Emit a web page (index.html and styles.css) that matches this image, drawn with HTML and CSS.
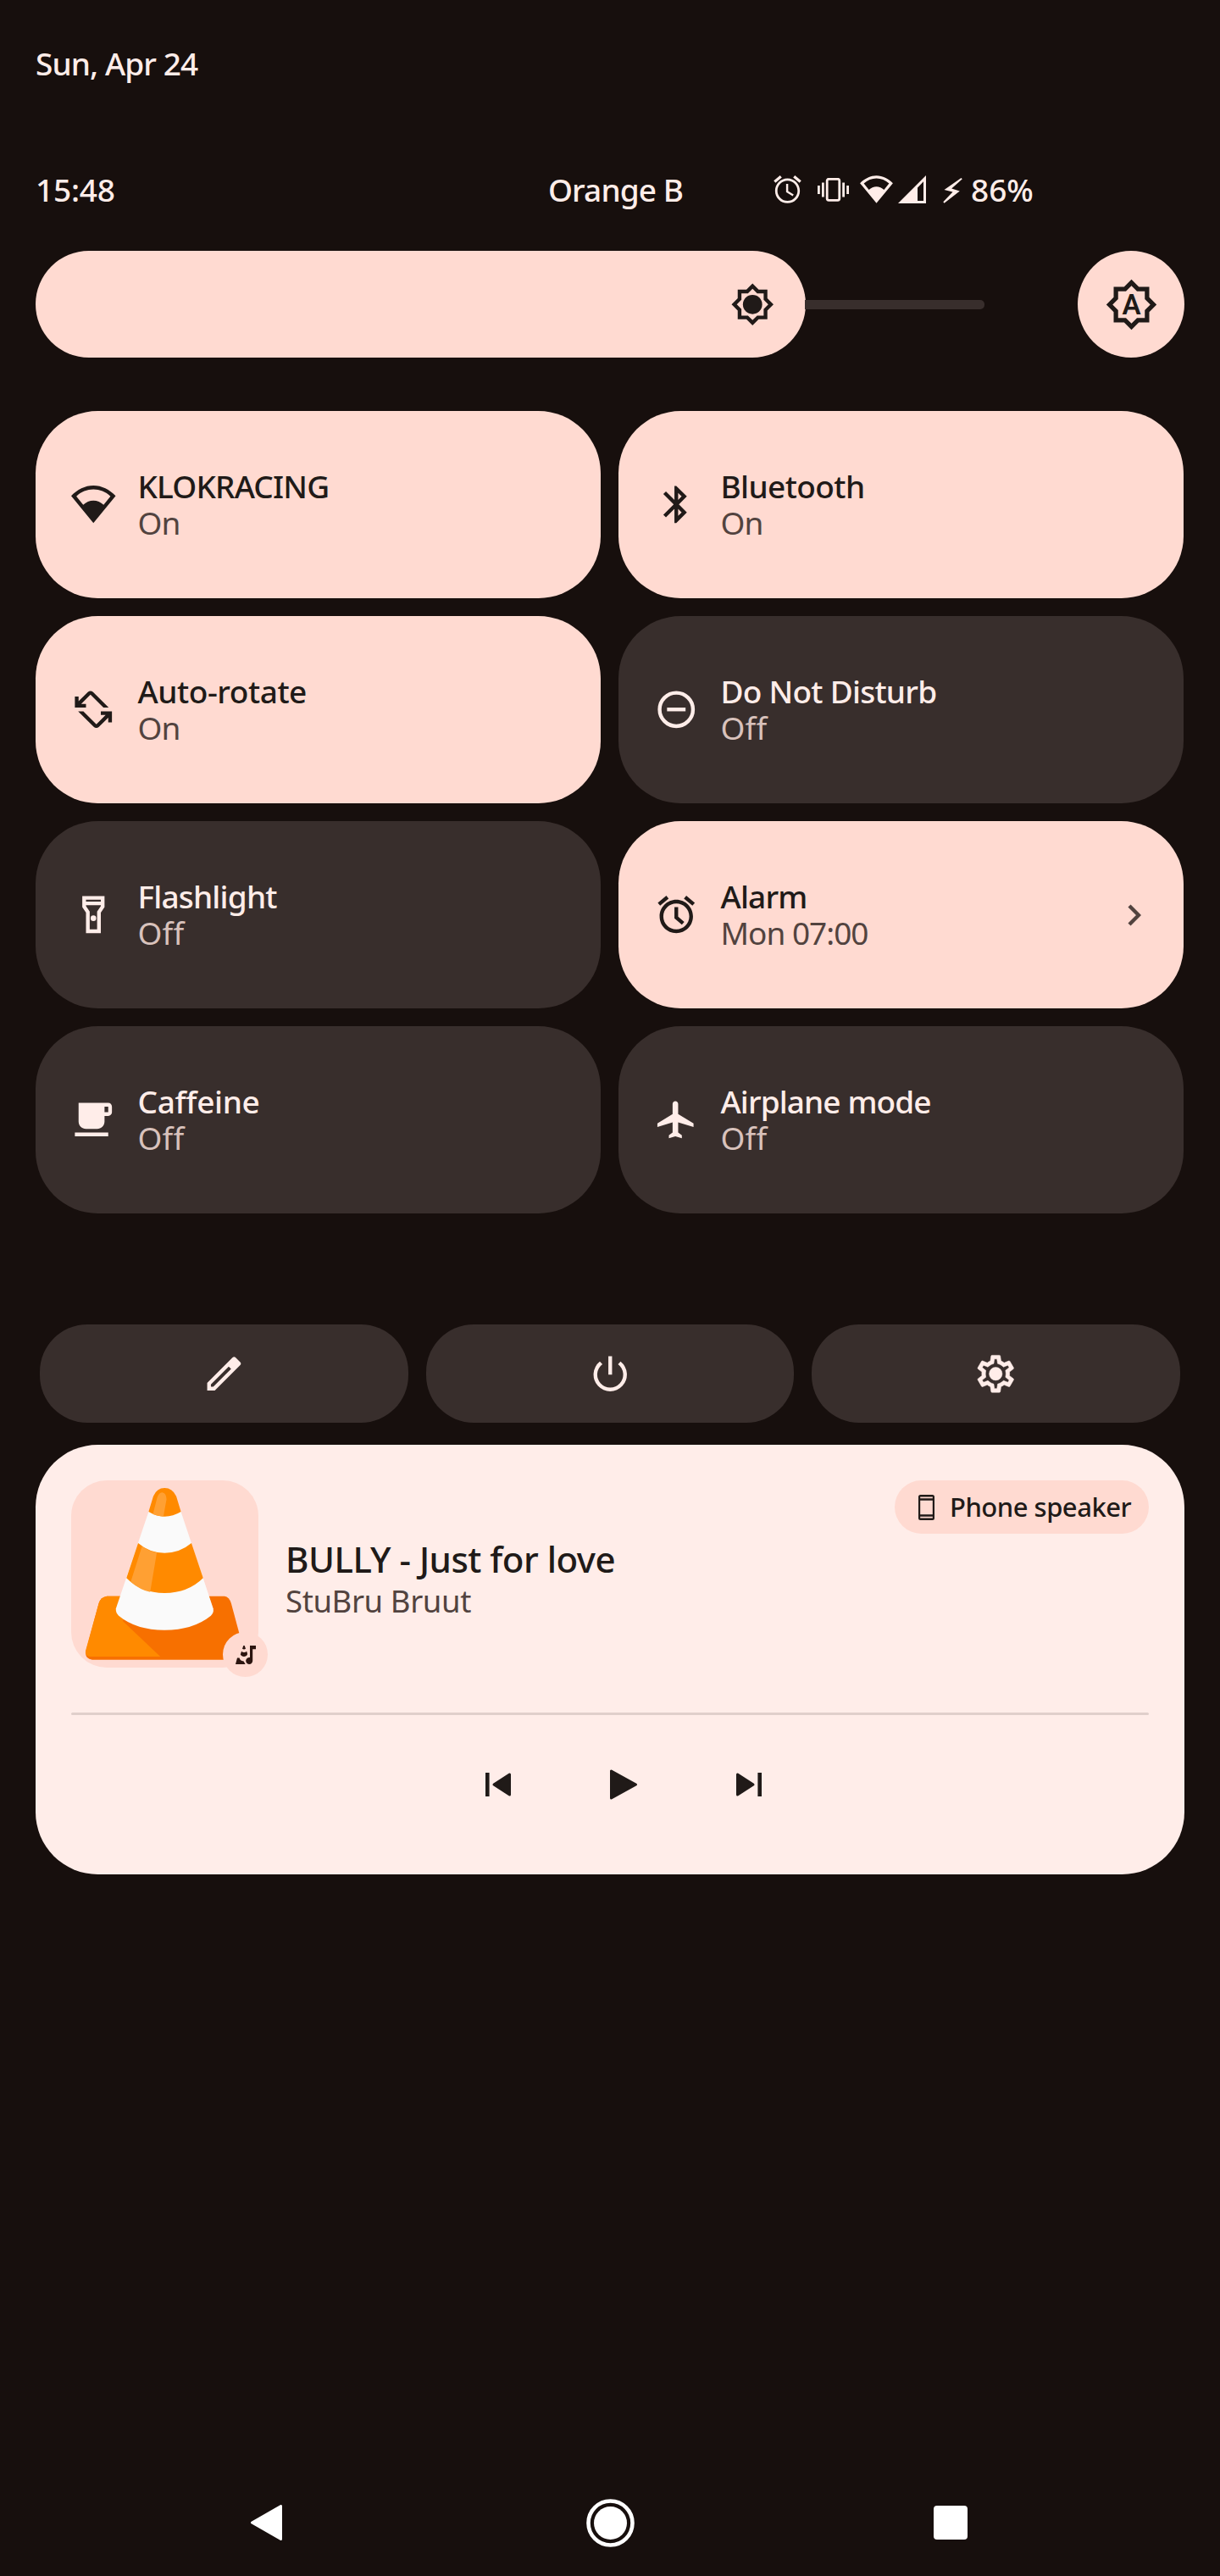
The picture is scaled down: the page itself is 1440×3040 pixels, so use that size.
FILE: index.html
```html
<!DOCTYPE html>
<html lang="en">
<head>
<meta charset="utf-8">
<title>Quick settings</title>
<link rel="stylesheet" href="styles.css">
</head>
<body>
<main class="shade">
  <div class="date"><span class="t-date">Sun, Apr 24</span></div>

  <header class="status">
    <span class="clock t-clock">15:48</span>
    <span class="carrier t-carrier">Orange B</span>
    <div class="status-icons">
      <svg class="s-alarm" viewBox="2 1.8 20 20.3"><path d="M22 5.72l-4.6-3.86-1.29 1.53 4.6 3.86L22 5.72zM7.88 3.39L6.6 1.86 2 5.71l1.29 1.53 4.59-3.85zM12.5 8H11v6l4.75 2.85.75-1.23-4-2.37V8zM12 4c-4.97 0-9 4.03-9 9s4.02 9 9 9 9-4.03 9-9-4.03-9-9-9zm0 16.3c-4 0-7.3-3.3-7.3-7.3S8 5.700 12 5.700s7.300 3.300 7.300 7.300-3.300 7.300-7.300 7.300z"/></svg>
      <svg class="s-vibrate" viewBox="0 0 37 28"><rect x="11.200" y="1.300" width="14.600" height="25" rx="2" fill="none" stroke="currentColor" stroke-width="2.800"/><path d="M0 9h2.800v10H0zM5 5.500h2.800v17H5zM29.200 5.500H32v17h-2.800zM34.200 9H37v10h-2.800z"/></svg>
      <svg class="s-wifi" viewBox="0 1.700 24 20.400"><path fill-rule="evenodd" d="M12 22L0 7.400C3.300 4 7.500 1.800 12 1.800s8.700 2.200 12 5.600zM2.800 7.600C5.400 5.200 8.600 3.900 12 3.900s6.600 1.300 9.200 3.700l-3.700 4.600C16 10.800 14 9.900 12 9.900s-4 .9-5.500 2.300z"/></svg>
      <svg class="s-signal" viewBox="0 0 33 33"><path fill-rule="evenodd" d="M0 33L33 0v33zM23 14.500V30h7V7.200z"/></svg>
      <svg class="s-bolt" viewBox="0 0 23 30"><path d="M21.500 0L1.500 14l10 2.600L.3 28.300l1.200 1.400L19.800 15.400l-9.600-3L22.800 1.300z"/></svg>
      <span class="t-battery">86%</span>
    </div>
  </header>

  <section class="brightness">
    <div class="slider">
      <div class="slider-fill">
        <svg class="icon" viewBox="0 0 24 24"><path d="M20 8.690V4h-4.690L12 .69 8.690 4H4v4.690L.69 12 4 15.310V20h4.690L12 23.310 15.310 20H20v-4.690L23.310 12 20 8.690zm-2 5.790V18h-3.520L12 20.480 9.520 18H6v-3.520L3.520 12 6 9.520V6h3.520L12 3.520 14.480 6H18v3.520L20.480 12 18 14.480z"/><circle cx="12" cy="12" r="5.200"/></svg>
      </div>
      <div class="slider-track"></div>
    </div>
    <div class="auto">
      <svg viewBox="0 0 24 24"><path d="M20 8.690V4h-4.690L12 .69 8.690 4H4v4.690L.69 12 4 15.310V20h4.690L12 23.310 15.310 20H20v-4.690L23.310 12 20 8.690zm-2 5.790V18h-3.520L12 20.480 9.520 18H6v-3.520L3.520 12 6 9.520V6h3.520L12 3.520 14.480 6H18v3.520L20.480 12 18 14.480z"/><text x="12" y="16.400" text-anchor="middle">A</text></svg>
    </div>
  </section>

  <section class="tiles">
    <div class="tile on">
      <svg class="icon" viewBox="0 0 24 24"><path fill-rule="evenodd" d="M12 22L0 7.400C3.300 4 7.500 1.800 12 1.800s8.700 2.200 12 5.600zM2.800 7.600C5.400 5.200 8.600 3.900 12 3.900s6.600 1.300 9.200 3.700l-3.700 4.600C16 10.800 14 9.900 12 9.900s-4 .9-5.500 2.300z"/></svg>
      <div class="label"><span class="name t-wifi">KLOKRACING</span><span class="state t-on">On</span></div>
    </div>
    <div class="tile on">
      <svg class="icon" viewBox="0 0 24 24"><path d="M17.710 7.710L12 2h-1v7.590L6.410 5 5 6.410 10.590 12 5 17.590 6.410 19 11 14.410V22h1l5.710-5.710-4.300-4.290 4.300-4.290zM13 5.830l1.880 1.880L13 9.590V5.830zm1.880 10.460L13 18.170v-3.760l1.880 1.880z"/></svg>
      <div class="label"><span class="name t-bt">Bluetooth</span><span class="state t-on">On</span></div>
    </div>
    <div class="tile on">
      <svg class="icon" viewBox="0 0 24 24"><path d="M4 7.590l5-5c.78-.78 2.050-.78 2.830 0L20.240 11h-2.830L10.400 4 5.410 9H8v2H2V5h2v2.590zM20 19h2v-6h-6v2h2.590l-4.990 5-7.010-7H3.760l8.410 8.410c.78.78 2.050.78 2.830 0l5-5V19z"/></svg>
      <div class="label"><span class="name t-rotate">Auto-rotate</span><span class="state t-on">On</span></div>
    </div>
    <div class="tile">
      <svg class="icon" viewBox="0 0 24 24"><circle cx="12" cy="12" r="9" fill="none" stroke="currentColor" stroke-width="2"/><path d="M7 11h10v2H7z"/></svg>
      <div class="label"><span class="name t-dnd">Do Not Disturb</span><span class="state t-off">Off</span></div>
    </div>
    <div class="tile">
      <svg class="icon" viewBox="0 0 24 24"><path d="M18 2H6v6l2 3v11h8V11l2-3V2zm-2 2v1H8V4h8zm-2 6.400V20h-4v-9.600L8 7.400V7h8v.39l-2 3.010z"/><circle cx="12" cy="14" r="1.500"/></svg>
      <div class="label"><span class="name t-flash">Flashlight</span><span class="state t-off">Off</span></div>
    </div>
    <div class="tile on">
      <svg class="icon" viewBox="0 0 24 24"><path d="M22 5.720l-4.600-3.860-1.290 1.530 4.600 3.860L22 5.720zM7.880 3.390L6.600 1.860 2 5.710l1.290 1.530 4.590-3.850zM13 8h-2v6l4 3.500 1.300-1.500-3.300-2.900V8zM12 4c-4.970 0-9 4.030-9 9s4.020 9 9 9 9-4.030 9-9-4.030-9-9-9zm0 16c-3.870 0-7-3.130-7-7s3.130-7 7-7 7 3.130 7 7-3.130 7-7 7z"/></svg>
      <div class="label"><span class="name t-alarm">Alarm</span><span class="state t-mon">Mon 07:00</span></div>
      <svg class="chevron" viewBox="0 0 16 26"><path d="M2 2l11 11L2 24" fill="none" stroke="currentColor" stroke-width="4.400"/></svg>
    </div>
    <div class="tile">
      <svg class="icon" viewBox="0 0 24 24"><path d="M2 19h18v2H2zM20 3H4v10c0 2.210 1.790 4 4 4h6c2.210 0 4-1.790 4-4v-3h2c1.110 0 2-.9 2-2V5c0-1.110-.89-2-2-2zm0 5h-2V5h2v3z"/></svg>
      <div class="label"><span class="name t-caf">Caffeine</span><span class="state t-off">Off</span></div>
    </div>
    <div class="tile">
      <svg class="icon" viewBox="0 0 24 24"><path d="M21.300 16v-2L13 9V3.500c0-.83-.67-1.500-1.500-1.500S10 2.670 10 3.500V9l-8.200 5v2l8.200-2.500V19l-2 1.500V22l3.500-1 3.500 1v-1.500L13 19v-5.500l8.300 2.500z"/></svg>
      <div class="label"><span class="name t-air">Airplane mode</span><span class="state t-off">Off</span></div>
    </div>
  </section>

  <section class="actions">
    <div class="action"><svg class="icon" viewBox="0 0 24 24"><path fill-rule="evenodd" d="M3 21v-4.100L16.700 3.200c.5-.4 1.100-.4 1.600 0l2.500 2.500c.5.500.5 1.100 0 1.600L7.100 21zM5 17.700V19h1.300L15.900 9.400l-1.300-1.300z"/></svg></div>
    <div class="action"><svg class="icon" viewBox="0 0 24 24"><path d="M11 2.500h2v10h-2zM17.600 5.400l-1.400 1.400A7 7 0 1 1 7.800 6.800L6.400 5.400a9 9 0 1 0 11.200 0z"/></svg></div>
    <div class="action"><svg class="icon gear" viewBox="0 0 24 24"><path d="M19.430 12.980c.04-.32.07-.64.07-.98 0-.34-.03-.66-.07-.98l2.110-1.650c.19-.15.24-.42.12-.64l-2-3.460c-.09-.16-.26-.25-.44-.25-.06 0-.12.01-.17.03l-2.490 1c-.52-.4-1.080-.73-1.690-.98l-.38-2.650C14.460 2.180 14.250 2 14 2h-4c-.25 0-.46.18-.49.42l-.38 2.650c-.61.25-1.170.59-1.690.98l-2.490-1c-.06-.02-.12-.03-.18-.03-.17 0-.34.09-.43.25l-2 3.460c-.13.22-.07.49.12.64l2.110 1.650c-.04.32-.07.65-.07.98 0 .33.03.66.07.98l-2.110 1.650c-.19.15-.24.42-.12.64l2 3.460c.09.16.26.25.44.25.06 0 .12-.01.17-.03l2.490-1c.52.4 1.080.73 1.690.98l.38 2.650c.03.24.24.42.49.42h4c.25 0 .46-.18.49-.42l.38-2.650c.61-.25 1.170-.59 1.690-.98l2.490 1c.06.02.12.03.18.03.17 0 .34-.09.43-.25l2-3.460c.12-.22.07-.49-.12-.64l-2.110-1.650zm-1.980-1.710c.04.31.05.52.05.73 0 .21-.02.43-.05.73l-.14 1.130.89.7 1.080.84-.7 1.210-1.270-.51-1.040-.42-.9.68c-.43.32-.84.56-1.250.73l-1.060.43-.16 1.130-.2 1.350h-1.400l-.19-1.350-.16-1.130-1.060-.43c-.43-.18-.83-.41-1.230-.71l-.91-.7-1.060.43-1.270.51-.7-1.210 1.080-.84.89-.7-.14-1.130c-.03-.31-.05-.54-.05-.74s.02-.43.05-.73l.14-1.130-.89-.7-1.080-.84.7-1.210 1.270.51 1.040.42.9-.68c.43-.32.84-.56 1.250-.73l1.060-.43.16-1.130.2-1.350h1.390l.19 1.350.16 1.130 1.060.43c.43.18.83.41 1.230.71l.91.7 1.060-.43 1.270-.51.7 1.210-1.070.85-.89.7.14 1.130z"/><circle cx="12" cy="12" r="3.500"/></svg></div>
  </section>

  <section class="media">
    <div class="track">
      <div class="art">
        <svg class="cone" viewBox="118 171 481 663" preserveAspectRatio="none">
          <path fill="#f77000" d="M210 581H512Q524 583 529 606L561 770Q563 806 545 806H172Q155 804 155 780L189 606Q194 584 210 581z"/>
          <path fill="#ff8a00" d="M210 581H300L250 668L347 795H165Q153 790 155 775L189 606Q194 584 210 581z"/>
          <path fill="#fafafa" d="M317 282L233 625Q232 640 240 650Q285 701 358 701T477 650Q485 640 483 625L400 282z"/>
          <path fill="#ff8a00" d="M317 282L329 227Q338 198 358 198T388 227L400 282Q380 299 358 299T317 282zM290 393L260 517Q298 570 358 570T457 517L427 393Q397 428 358 428T290 393z"/>
          <path fill="#ffa033" d="M328 291L339 232Q344 213 352 214Q362 216 363 238L355 299Q340 298 328 291zM300 404L271 530Q295 559 321 566L338 427Q318 422 300 404z"/>
        </svg>
        <div class="badge"><svg viewBox="0 0 24 22"><path d="M9.300 0h1.400l1.300 3.800a4 4 0 0 1-4 0zM7 6.700c2 1.600 4.200 1.600 6.200 0l.9 3.200c-.7 2.200-2.400 3-4.100 3-2 0-3.400-.9-4.200-2.400zM2 14.500h2.600c.4 2.300 2 3.700 5 4l2 3.500H0zM17 0h7v4.200h-3.800V18a4 4 0 1 1-3.200-4z"/></svg></div>
      </div>
      <div class="meta"><span class="song t-song">BULLY - Just for love</span><span class="artist t-artist">StuBru Bruut</span></div>
      <div class="output">
        <svg viewBox="0 0 19 30"><path fill-rule="evenodd" d="M2.500 0h14Q19 0 19 2.500v25q0 2.500-2.500 2.500h-14Q0 30 0 27.500v-25Q0 0 2.500 0zM2.200 2.600v1.600h14.600V2.600zM2.200 6.800v16.400h14.600V6.800zM2.200 25.800v1.600h14.600v-1.600z"/></svg>
        <span class="t-output">Phone speaker</span>
      </div>
    </div>
    <div class="seek"></div>
    <div class="controls">
      <svg viewBox="0 0 60 60"><path d="M15 16h4.600v28H15z"/><path class="round" d="M43.500 18v24L25 30z"/></svg>
      <svg viewBox="0 0 60 60"><path class="round" d="M15.500 14v32L44.500 30z"/></svg>
      <svg viewBox="0 0 60 60"><path class="round" d="M16.500 18v24L35 30z"/><path d="M40.400 16H45v28h-4.600z"/></svg>
    </div>
  </section>

  <nav class="navbar">
    <svg class="back" viewBox="0 0 37 42"><path class="round" d="M35.500 1.500v39L1.500 21z"/></svg>
    <svg class="home" viewBox="0 0 57 57"><circle cx="28.500" cy="28.500" r="26" fill="none" stroke="currentColor" stroke-width="4.600"/><circle cx="28.500" cy="28.500" r="19.500"/></svg>
    <div class="recents"></div>
  </nav>
</main>
</body>
</html>
```
FILE: styles.css
```css
* { box-sizing: border-box; }
body {
  margin: 0;
  background: #170f0d;
  color: #ffede9;
  font-family: "Noto Sans", "Open Sans", sans-serif;
  font-size: 37px;
  font-weight: 500;
  line-height: 43px;
  white-space: nowrap;
}
svg { display: block; flex: none; fill: currentColor; }
.round { stroke: currentColor; stroke-width: 3; stroke-linejoin: round; }
.icon { width: 52.5px; height: 52.5px; }
.gear { stroke: currentColor; stroke-width: 0.25; }

.shade {
  width: 1440px;
  height: 3040px;
  padding: 53px 42px 0;
  display: flex;
  flex-direction: column;
}
.date { height: 43px; }
.status {
  height: 53px;
  margin-top: 101px;
  display: flex;
  align-items: center;
}
.clock { width: 605px; }
.carrier { width: 224px; }
.status-icons { display: flex; align-items: center; }
.s-alarm { width: 33px; height: 33px; margin-left: 42px; }
.s-vibrate { width: 37px; height: 28px; margin-left: 19px; }
.s-wifi { width: 39px; height: 33px; margin-left: 13px; }
.s-signal { width: 33px; height: 33px; margin-left: 6px; }
.s-bolt { width: 23px; height: 30px; margin: 2px 10px 0 20px; }

.brightness {
  margin-top: 46px;
  display: flex;
  justify-content: space-between;
  color: #201a18;
}
.slider { width: 1120px; display: flex; align-items: center; }
.slider-fill {
  width: 909px;
  height: 126px;
  border-radius: 63px;
  padding-right: 37px;
  background: #ffdad1;
  display: flex;
  align-items: center;
  justify-content: flex-end;
}
.slider-track {
  flex: 1;
  height: 11px;
  margin-left: -1px;
  border-radius: 0 5px 5px 0;
  background: #382e2c;
}
.auto {
  width: 126px;
  height: 126px;
  border-radius: 50%;
  background: #ffdad1;
  display: grid;
  place-items: center;
}
.auto svg { width: 63px; height: 63px; }
.auto text { font: 600 12.600px Roboto, sans-serif; }

.tiles {
  margin-top: 63px;
  display: grid;
  grid-template-columns: 667px 667px;
  gap: 21px;
}
.tile {
  height: 221px;
  padding: 0 50px 0 42px;
  border-radius: 73.500px;
  background: #382e2c;
  display: flex;
  align-items: center;
}
.tile.on { background: #ffdad1; color: #201a18; }
.label { flex: 1; display: flex; flex-direction: column; margin-left: 26px; padding-bottom: 1px; }
.state { font-weight: 400; color: #d8c2bc; }
.on .state, .on .chevron { color: #52433f; }
.chevron { width: 16px; height: 26px; }

.actions { margin: 131px 5px 0; display: flex; gap: 21px; }
.action {
  flex: 1;
  height: 116px;
  border-radius: 56px;
  background: #382e2c;
  display: grid;
  place-items: center;
}

.media {
  margin-top: 26px;
  height: 507px;
  padding: 42px;
  border-radius: 73.500px;
  background: #ffede9;
  color: #201a18;
}
.track { display: flex; height: 221px; }
.art { position: relative; width: 221px; border-radius: 42px; background: #ffdad1; }
.cone { width: 221px; height: 221px; }
.badge {
  position: absolute;
  right: -11px;
  bottom: -11px;
  width: 53px;
  height: 53px;
  border-radius: 50%;
  background: #ffdad1;
  color: #2c1510;
  display: grid;
  place-items: center;
}
.badge svg { width: 24px; height: 22px; }
.meta { flex: 1; margin-left: 32px; padding-top: 67px; display: flex; flex-direction: column; }
.song { font-size: 42px; line-height: 52px; }
.artist { font-weight: 400; font-size: 36.500px; line-height: 46px; color: #52433f; }
.output {
  width: 300px;
  height: 63px;
  padding-left: 28px;
  border-radius: 31.500px;
  background: #ffdad1;
  display: flex;
  align-items: center;
  font-size: 31px;
  gap: 18px;
}
.output svg { width: 19px; height: 30px; }
.seek { height: 3px; margin-top: 53px; border-radius: 2px; background: #e0cfcb; }
.controls { display: flex; justify-content: center; gap: 88px; margin-top: 52px; padding-left: 32px; }
.controls svg { width: 60px; height: 60px; }

.navbar {
  margin-top: auto;
  height: 126px;
  display: flex;
  align-items: center;
  color: #fff;
}
.back { width: 37px; height: 42px; margin-left: 254px; }
.home { width: 57px; height: 57px; margin-left: 359px; }
.recents { width: 40px; height: 40px; margin-left: 353px; border-radius: 4px; background: #fff; }

/* Per-label tracking */
.t-date { letter-spacing: -0.9px; }
.t-clock { letter-spacing: -0.2px; }
.t-carrier { letter-spacing: -0.9px; }
.t-wifi { letter-spacing: -0.8px; }
.t-bt { letter-spacing: -0.6px; }
.t-rotate { letter-spacing: -0.45px; }
.t-dnd { letter-spacing: -0.75px; }
.t-flash { letter-spacing: -0.8px; }
.t-alarm { letter-spacing: -0.8px; }
.t-on { letter-spacing: -1px; }
.t-off { letter-spacing: 0.2px; font-variant-ligatures: none; }
.t-mon { letter-spacing: -1px; }
.t-caf { letter-spacing: -0.35px; }
.t-air { letter-spacing: -0.9px; }
.t-song { letter-spacing: -0.5px; }
.t-artist { letter-spacing: -0.4px; }
.t-output { letter-spacing: -0.5px; }
```
